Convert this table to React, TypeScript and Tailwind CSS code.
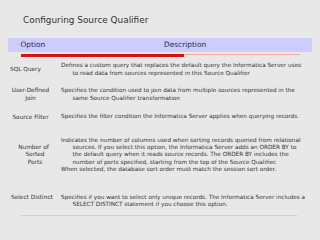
import React from "react";

const Line = ({ children, indent }: { children: React.ReactNode; indent?: boolean }) => (
  <div className={"whitespace-nowrap leading-[7.3px] " + (indent ? "pl-[11.5px]" : "")}>{children}</div>
);

export default function App() {
  return (
    <div
      className="w-[320px] h-[240px] bg-[#e8e8e8] overflow-hidden flex flex-col text-[#333333]"
      style={{ fontFamily: '"DejaVu Sans", Verdana, sans-serif' }}
    >
      <div className="pt-[14px] pl-[23px] text-[8.9px] leading-[12px] text-[#333333]">
        Configuring Source Qualifier
      </div>
      <div className="mt-[12px] ml-[8px] w-[304px] h-[14px] bg-[#ccccff] flex items-center text-[7.4px] text-[#2a2a4a]">
        <span className="pl-[12.5px] w-[156px]">Option</span>
        <span>Description</span>
      </div>
      <div className="mt-[2px] ml-[21px] flex items-start">
        <div className="w-[163px] h-[3px] bg-[#dd1111]" />
        <div className="w-[116px] h-px bg-[#f0a8a8]" />
      </div>
      <div className="flex flex-col text-[5.72px] text-[#333333]">
        <div className="h-[25px] flex items-center">
          <div className="w-[45px] ml-[8px] pl-[2px] text-[5.8px]">SQL Query</div>
          <div className="ml-[8px]">
            <Line>Defines a custom query that replaces the default query the Informatica Server uses</Line>
            <Line indent>to read data from sources represented in this Source Qualifier</Line>
          </div>
        </div>
        <div className="h-[25px] flex items-center">
          <div className="w-[45px] ml-[8px] text-center text-[5.8px] leading-[7.3px]">
            <div>User-Defined</div>
            <div>Join</div>
          </div>
          <div className="ml-[8px]">
            <Line>Specifies the condition used to join data from multiple sources represented in the</Line>
            <Line indent>same Source Qualifier transformation</Line>
          </div>
        </div>
        <div className="h-[20px] flex items-center">
          <div className="w-[45px] ml-[8px] text-center text-[5.8px]">Source Filter</div>
          <div className="ml-[8px]">
            <Line>Specifies the filter condition the Informatica Server applies when querying records.</Line>
          </div>
        </div>
        <div className="h-[56px] flex items-center">
          <div className="w-[45px] ml-[8px] pl-[6px] text-center text-[5.8px] leading-[7.5px]">
            <div>Number of</div>
            <div className="pl-[3px]">Sorted</div>
            <div className="pl-[3px]">Ports</div>
          </div>
          <div className="ml-[8px]">
            <Line>Indicates the number of columns used when sorting records queried from relational</Line>
            <Line indent>sources. If you select this option, the Informatica Server adds an ORDER BY to</Line>
            <Line indent>the default query when it reads source records. The ORDER BY includes the</Line>
            <Line indent>number of ports specified, starting from the top of the Source Qualifier.</Line>
            <Line>When selected, the database sort order must match the session sort order.</Line>
          </div>
        </div>
        <div className="h-[30px] pt-[11px] flex items-start">
          <div className="w-[45px] ml-[8px] pl-[3px] text-[5.8px] leading-[7.3px] whitespace-nowrap">Select Distinct</div>
          <div className="ml-[8px]">
            <Line>Specifies if you want to select only unique records. The Informatica Server includes a</Line>
            <Line indent>SELECT DISTINCT statement if you choose this option.</Line>
          </div>
        </div>
      </div>
      <div className="mt-[2px] ml-[21px] w-[276px] h-px bg-[#f0c0c0]" />
    </div>
  );
}
